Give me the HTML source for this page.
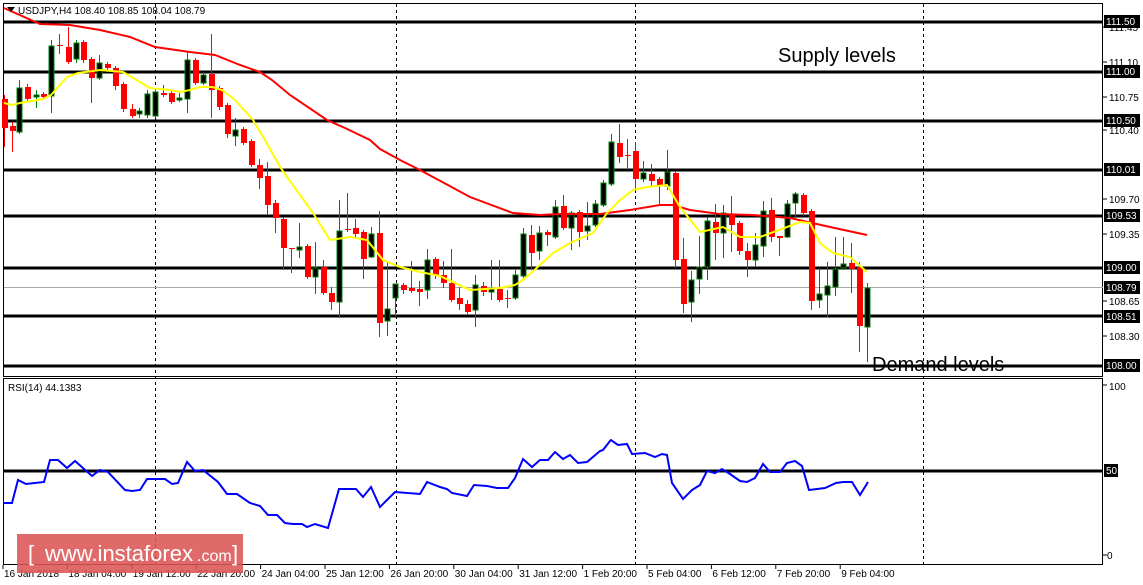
<!DOCTYPE html>
<html><head><meta charset="utf-8"><style>
html,body{margin:0;padding:0;background:#fff;width:1143px;height:585px;overflow:hidden}
svg{display:block;font-family:"Liberation Sans",sans-serif}
</style></head><body>
<svg id="s" width="1143" height="585" viewBox="0 0 1143 585" xmlns="http://www.w3.org/2000/svg">
<rect x="0" y="0" width="1143" height="585" fill="#fff"/>
<g stroke="#000" stroke-width="1" fill="none" shape-rendering="crispEdges">
<rect x="3.5" y="3.5" width="1099" height="373"/>
<rect x="3.5" y="378.5" width="1099" height="186"/>
</g>
<g stroke="#000" stroke-width="1" stroke-dasharray="3,3" shape-rendering="crispEdges">
<line x1="155.5" y1="4" x2="155.5" y2="564"/>
<line x1="396.5" y1="4" x2="396.5" y2="564"/>
<line x1="635.5" y1="4" x2="635.5" y2="564"/>
<line x1="923.5" y1="4" x2="923.5" y2="564"/>
</g>
<g stroke="#000" stroke-width="3" shape-rendering="crispEdges">
<line x1="4" y1="22" x2="1103" y2="22"/>
<line x1="4" y1="72" x2="1103" y2="72"/>
<line x1="4" y1="121" x2="1103" y2="121"/>
<line x1="4" y1="170" x2="1103" y2="170"/>
<line x1="4" y1="216" x2="1103" y2="216"/>
<line x1="4" y1="268" x2="1103" y2="268"/>
<line x1="4" y1="316" x2="1103" y2="316"/>
<line x1="4" y1="366" x2="1103" y2="366"/>
<line x1="4" y1="471" x2="1103" y2="471"/>
</g>
<line x1="4" y1="287.5" x2="1103" y2="287.5" stroke="#aaa" stroke-width="1"/>
<g id="candles"></g>
<polyline fill="none" stroke="#f00" stroke-width="2" points="4,8 40,24 70,25 100,30 130,37 155,47 190,52 215,55 240,65 260,72 272,80 290,95 327,120 345,128 370,140 380,149 400,160 420,170 470,197 513,213 540,215 560,214 600,214 630,210 660,205 673,205 690,210 720,214 752,215 790,218 830,227 867,235"/>
<polyline fill="none" stroke="#ff0" stroke-width="2" points="4,103 12,105 20,103 43,99 51,95 67,77 78,73 100,70 123,72 150,88 170,90 180,92 190,90 200,87 212,87 222,90 235,100 253,120 265,140 280,167 300,195 313,213 330,240 350,237 367,240 383,260 400,267 420,272 440,276 470,290 500,288 515,285 523,280 540,265 553,253 570,243 593,233 607,213 620,200 633,190 647,187 667,185 680,207 700,232 723,227 740,237 760,237 787,227 800,222 810,223 820,243 833,253 850,257 867,272"/>
<polyline fill="none" stroke="#00f" stroke-width="2" points="3,503 12,503 18,480 26,484 44,482 50,460 58,460 67,468 75,461 92,476 100,470 108,472 125,490 132,491 140,490 147,479 165,479 172,484 178,483 187,462 195,471 203,470 218,482 227,494 237,494 250,503 260,506 268,515 277,515 285,523 293,524 302,524 307,527 315,524 328,528 339,489 356,489 363,497 371,487 380,507 388,499 395,492 420,494 427,482 440,487 447,489 452,493 467,496 474,485 487,486 497,488 508,488 515,478 523,459 532,467 540,460 548,460 555,452 563,459 570,455 578,463 587,462 600,451 603,450 610,441 611,440 618,445 627,444 632,454 645,453 655,457 662,454 667,455 672,483 683,499 692,490 700,485 707,471 715,473 722,469 730,474 740,481 747,482 755,478 763,464 770,472 780,472 787,463 795,461 802,466 809,490 825,488 836,483 843,482 852,482 860,495 868,482"/>
<polygon points="7,7 15,7 11,12" fill="#000"/>
<text x="18" y="14" font-size="10" fill="#000">USDJPY,H4  108.40 108.85 108.04 108.79</text>
<text x="8" y="391" font-size="10" fill="#000">RSI(14) 44.1383</text>
<text x="778" y="62" font-size="20" fill="#000">Supply levels</text>
<text x="872" y="371" font-size="20" fill="#000">Demand levels</text>
<g font-size="10" fill="#000" id="axis">
<text x="1109" y="31">111.45</text><text x="1109" y="66">111.10</text><text x="1109" y="101">110.75</text><text x="1109" y="134">110.40</text><text x="1109" y="203">109.70</text><text x="1109" y="238">109.35</text><text x="1109" y="305">108.65</text><text x="1109" y="340">108.30</text>
<text x="1109" y="390">100</text><text x="1107" y="559">0</text>
</g>
<g id="boxes"></g>
<g font-size="10" fill="#000" id="time"></g>
<rect x="17" y="534" width="226" height="39" fill="#dc5555" opacity="0.88"/>
<text x="28" y="561" font-size="22" fill="#fff">[</text>
<text x="45" y="561" font-size="22" fill="#fff">www.instaforex</text>
<text x="197" y="561" font-size="16" fill="#fff">.com</text>
<text x="232" y="561" font-size="22" fill="#fff">]</text>
</svg>
<script>
var NS="http://www.w3.org/2000/svg";
function el(p,t,a,txt){var e=document.createElementNS(NS,t);for(var k in a)e.setAttribute(k,a[k]);if(txt!=null)e.textContent=txt;p.appendChild(e);return e;}
var C=[
[4,99,128,95,147],[12,126,131,122,152],[19,132,88,80,134],[27,87,99,84,101],[36,97,95,90,108],[43,94,97,92,99],[51,96,46,40,113],[59,45,46,34,54],[68,47,62,27,64],[76,59,43,40,63],[83,42,60,40,63],[91,59,78,57,103],[99,78,63,55,80],[107,64,68,62,70],[115,68,86,66,90],[123,84,109,82,112],[132,109,116,104,118],[139,114,111,108,118],[147,115,94,90,118],[155,116,92,88,118],[163,93,95,85,97],[171,93,102,90,104],[179,100,98,93,102],[187,99,60,52,113],[195,60,83,58,85],[203,83,75,72,85],[211,74,90,34,118],[219,88,107,86,110],
[227,105,134,103,138],[235,136,130,118,146],[243,129,143,127,145],[251,141,165,139,167],[259,165,178,159,189],[267,176,205,162,215],[275,203,218,200,233],[283,219,248,217,270],[291,248,248,248,273],[299,250,247,223,258],[307,246,277,244,279],[315,277,268,242,294],[323,267,293,260,295],[331,293,302,287,310],[339,302,231,200,318],[347,229,229,193,232],[355,228,234,219,237],[363,232,259,230,279],[371,257,234,227,258],[379,233,323,211,337],[387,321,309,262,336],[395,298,284,284,318],
[403,285,290,283,294],[411,288,291,261,293],[419,289,292,281,306],[427,290,260,249,299],[435,259,275,257,279],[443,275,283,261,288],[451,283,300,249,302],[459,298,304,287,310],[467,304,312,300,314],[475,310,285,275,327],[483,286,292,282,296],[491,292,288,260,300],[499,289,300,260,302],[507,298,298,290,308],[515,298,275,270,300],[523,276,234,228,278],[531,235,253,225,270],[539,251,233,226,260],[547,232,235,230,246],[555,237,207,200,239],[563,206,228,195,230],[571,228,213,211,250],[579,212,232,210,247],[587,231,226,202,240],[595,225,204,200,227],[603,205,183,180,207],[611,184,142,134,186],[619,143,157,124,163],[627,155,155,139,170],[635,151,179,142,190],[643,179,173,161,182],[651,174,181,164,187],[659,179,185,177,204],[667,186,172,150,190],
[675,173,260,171,268],[683,259,304,238,313],[691,302,280,271,322],[699,279,267,236,294],[707,267,221,217,280],[715,222,233,204,260],[723,233,213,205,258],[731,214,225,196,252],[739,223,251,221,255],[747,251,260,243,277],[755,260,245,233,267],[763,246,211,201,257],[771,210,237,198,242],[779,236,238,236,256],[787,237,204,200,238],[795,203,194,192,220],[803,195,213,193,216],[811,211,301,209,310],[819,300,294,268,308],[827,295,286,262,317],[835,287,269,237,296],[843,268,264,237,270],[851,263,269,243,293],[859,267,326,262,352],[867,327,288,283,362]];
var g=document.getElementById("candles");
C.forEach(function(c){var x=c[0],o=c[1],cl=c[2],h=c[3],l=c[4];var bull=cl<o;var col=bull?"#008000":"#ff0000";
el(g,"line",{x1:x+0.5,x2:x+0.5,y1:h,y2:l,stroke:col,"stroke-width":1});
var top=Math.min(o,cl),bh=Math.max(Math.abs(o-cl),1);
if(bull){el(g,"rect",{x:x-2,y:top,width:5,height:bh,fill:"#000",stroke:col,"stroke-width":1});}
else{el(g,"rect",{x:x-2,y:top,width:6,height:bh,fill:col});}
});
var b=document.getElementById("boxes");
[["111.50",21],["111.00",71],["110.50",120],["110.01",169],["109.53",215],["109.00",267],["108.79",287],["108.51",316],["108.00",365],["50",470]].forEach(function(v){
var w=v[0]=="50"?14:36;el(b,"rect",{x:1104,y:v[1]-6,width:w,height:13,fill:"#000"});el(b,"text",{x:1106,y:v[1]+4,"font-size":10,fill:"#fff"},v[0]);});
var ax=document.getElementById("axis");
[31,66,101,134,203,238,305,340,389,559].forEach(function(y){el(ax,"line",{x1:1103,x2:1107,y1:y-4,y2:y-4,stroke:"#000"});});
var t=document.getElementById("time");
["16 Jan 2018","18 Jan 04:00","19 Jan 12:00","22 Jan 20:00","24 Jan 04:00","25 Jan 12:00","26 Jan 20:00","30 Jan 04:00","31 Jan 12:00","1 Feb 20:00","5 Feb 04:00","6 Feb 12:00","7 Feb 20:00","9 Feb 04:00"].forEach(function(s,i){var x=3+i*64.4;el(t,"line",{x1:x,x2:x,y1:565,y2:569,stroke:"#000"});el(t,"text",{x:x+1,y:577},s);});
</script>
</body></html>
